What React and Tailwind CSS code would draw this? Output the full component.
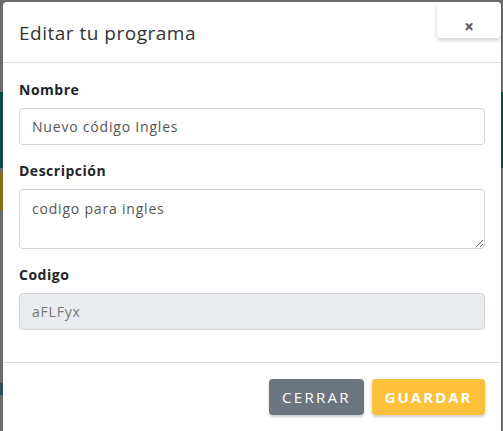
import React from 'react';

const Field = ({ label, children }) => (
  <div className="flex flex-col">
    <label className="text-[14px] font-bold text-[#212529] leading-[20px] mb-[8px] tracking-[0.5px]">{label}</label>
    {children}
  </div>
);

export default function App() {
  return (
    <div
      className="w-[503px] h-[431px] bg-[#6c6c6c] flex pt-[2px] pl-[3px] pr-[2px] overflow-hidden relative"
      style={{ fontFamily: '"Open Sans", "Noto Sans", sans-serif' }}
    >
      {/* backdrop bits peeking out */}
      <div className="absolute left-0 top-[92px] w-full h-[76px] bg-[#0f4a44]" />
      <div className="absolute left-0 top-[172px] w-[3px] h-[38px] bg-[#8a6a1c]" />
      <div className="absolute left-0 top-[383px] w-[3px] h-[12px] bg-[#2c4f5a]" />

      <div className="relative flex-1 bg-white rounded-[4px] flex flex-col h-[440px]">
        {/* header */}
        <div className="h-[61px] flex items-center px-[16px] border-b border-[#dee2e6]">
          <h2 className="text-[19px] text-[#333] leading-none pt-[2px] tracking-[0.5px]">Editar tu programa</h2>
        </div>
        <button className="absolute right-[0px] top-0 w-[64px] h-[36px] bg-white rounded-[4px] shadow-[0_2px_4px_rgba(0,0,0,0.2)] flex items-center justify-center pt-[14px] text-[#555] text-[17px] font-bold">
          ×
        </button>

        {/* body */}
        <div className="px-[16px] pt-[17px] pb-[32px] flex flex-col gap-[16px] border-b border-[#dee2e6]">
          <Field label="Nombre">
            <input
              readOnly
              value="Nuevo código Ingles"
              className="h-[37px] rounded-[4px] border border-[#ced4da] px-[12px] text-[14px] text-[#555] tracking-[0.8px] outline-none"
            />
          </Field>
          <Field label="Descripción">
            <textarea
              readOnly
              value="codigo para ingles"
              className="h-[60px] rounded-[4px] border border-[#ced4da] px-[12px] pt-[8px] text-[14px] text-[#555] tracking-[0.8px] outline-none"
            />
          </Field>
          <Field label="Codigo">
            <input
              readOnly
              disabled
              value="aFLFyx"
              className="h-[37px] rounded-[4px] border border-[#ced4da] bg-[#e9ecef] px-[12px] text-[14px] text-[#777] tracking-[0.8px] outline-none"
            />
          </Field>
        </div>

        {/* footer */}
        <div className="flex justify-end gap-[8px] px-[16px] pt-[16px]">
          <button className="h-[36px] w-[95px] rounded-[4px] bg-[#6c757d] text-white text-[15px] tracking-[2.3px] shadow-[0_2px_3px_rgba(0,0,0,0.2)]">
            CERRAR
          </button>
          <button className="h-[36px] w-[113px] rounded-[4px] bg-[#ffc03a] text-white text-[15px] font-bold tracking-[2px] shadow-[0_2px_3px_rgba(0,0,0,0.2)]">
            GUARDAR
          </button>
        </div>
      </div>
    </div>
  );
}
